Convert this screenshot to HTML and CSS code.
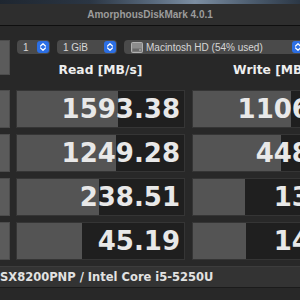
FILE: index.html
```html
<!DOCTYPE html>
<html lang="en">
<head>
    <meta charset="UTF-8">
    <meta name="viewport" content="width=device-width, initial-scale=1.0">
    <title>AmorphousDiskMark</title>
    <link rel="stylesheet" href="styles.css">
</head>
<body>
    <div class="wallpaper"></div>
    <header class="titlebar">AmorphousDiskMark 4.0.1</header>

    <main class="board">
        <div class="side-btn side-all"></div>

        <div class="toolbar">
            <div class="popup popup-count">
                <span class="popup-text">1</span>
                <span class="stepper">
                    <svg width="12" height="12" viewBox="0 0 12 12"><path d="M3.6 5 L6 2.7 L8.4 5 M3.6 7 L6 9.3 L8.4 7" fill="none" stroke="#fff" stroke-width="1.2" stroke-linecap="round" stroke-linejoin="round"/></svg>
                </span>
            </div>
            <div class="popup popup-size">
                <span class="popup-text">1 GiB</span>
                <span class="stepper">
                    <svg width="12" height="12" viewBox="0 0 12 12"><path d="M3.6 5 L6 2.7 L8.4 5 M3.6 7 L6 9.3 L8.4 7" fill="none" stroke="#fff" stroke-width="1.2" stroke-linecap="round" stroke-linejoin="round"/></svg>
                </span>
            </div>
            <div class="popup popup-disk">
                <svg class="disk-icon" width="12" height="11" viewBox="0 0 12 11">
                    <rect x="0.5" y="0.5" width="11" height="10" rx="1" fill="#8c8c8c" stroke="#b0b0b0"/>
                    <rect x="1.5" y="6.5" width="9" height="3" fill="#6a6a6a"/>
                    <circle cx="9" cy="8" r="0.8" fill="#cfcfcf"/>
                </svg>
                <span class="popup-text">Macintosh HD (54% used)</span>
                <span class="stepper">
                    <svg width="12" height="12" viewBox="0 0 12 12"><path d="M3.6 5 L6 2.7 L8.4 5 M3.6 7 L6 9.3 L8.4 7" fill="none" stroke="#fff" stroke-width="1.2" stroke-linecap="round" stroke-linejoin="round"/></svg>
                </span>
            </div>
        </div>

        <div class="col-head">Read [MB/s]</div>
        <div class="col-head">Write [MB/s]</div>

        <div class="side-btn"></div>
        <div class="cell" style="--p: 60.4%">1593.38</div>
        <div class="cell" style="--p: 58.6%">1106.42</div>

        <div class="side-btn"></div>
        <div class="cell" style="--p: 59.2%">1249.28</div>
        <div class="cell" style="--p: 52.7%">448.76</div>

        <div class="side-btn"></div>
        <div class="cell" style="--p: 49.1%">238.51</div>
        <div class="cell" style="--p: 31.4%">13.27</div>

        <div class="side-btn"></div>
        <div class="cell" style="--p: 39%">45.19</div>
        <div class="cell" style="--p: 32%">14.05</div>

        <footer class="footer">SX8200PNP / Intel Core i5-5250U</footer>
    </main>
</body>
</html>
```

FILE: styles.css
```css
html, body {
    margin: 0;
    padding: 0;
    overflow: hidden;
}

body {
    width: 300px;
    height: 300px;
    background-color: #282828;
    font-family: 'Liberation Sans', Arial, sans-serif;
}

.wallpaper {
    height: 4px;
    background: linear-gradient(to right, #1e2630 0%, #2b3644 30%, #56677a 50%, #7c8ea2 65%, #4a5a6c 85%, #2c3846 100%);
}

.titlebar {
    height: 21px;
    line-height: 21px;
    background-color: #2e2e2e;
    border-bottom: 1px solid #0f0f0f;
    color: #9c9c9c;
    font-size: 10px;
    font-weight: bold;
    text-align: center;
}

.board {
    display: grid;
    grid-template-columns: 16px 176px 169px;
    grid-template-rows: 14px 24px repeat(4, 38px) 22px;
    row-gap: 6px;
    padding-top: 14px;
    width: 361px;
}

.side-btn {
    width: 9px;
    background-color: #5b5b5b;
    border: 1px solid #4c4c4c;
    border-left: none;
}

.side-all {
    grid-row: 1 / 3;
    height: 33px;
    align-self: start;
}

.toolbar {
    grid-column: 2 / 4;
    display: flex;
    gap: 7px;
    padding-left: 1px;
}

.popup {
    display: flex;
    align-items: center;
    height: 14px;
    background-color: #4a4a4a;
    border-radius: 4px;
    padding: 0 1px 0 6px;
    box-sizing: border-box;
    color: #d6d6d6;
    font-size: 10px;
}

.popup-text {
    flex: 1;
}

.popup-count {
    width: 33px;
}

.popup-size {
    width: 60px;
}

.popup-disk {
    width: 181px;
    padding-left: 7px;
}

.disk-icon {
    margin-right: 3px;
}

.stepper {
    display: flex;
    width: 12px;
    height: 12px;
    background-color: #2c6fe4;
    border-radius: 3px;
}

.col-head {
    width: 169px;
    color: #eeeeee;
    font-family: 'DejaVu Sans', sans-serif;
    font-size: 12.3px;
    font-weight: bold;
    text-align: center;
    line-height: 20px;
}

.col-head:nth-of-type(1) {
    grid-column: 2;
}

.cell {
    width: 169px;
    box-sizing: border-box;
    border: 1px solid #353535;
    background: linear-gradient(to right, #545454 var(--p), #1f1f1f var(--p));
    color: #e8e8e8;
    font-family: 'DejaVu Sans', sans-serif;
    font-size: 26px;
    font-weight: bold;
    line-height: 36px;
    text-align: right;
    padding-right: 4px;
}

.footer {
    grid-column: 1 / -1;
    width: 300px;
    box-sizing: border-box;
    background-color: #333333;
    border-top: 1px solid #3c3c3c;
    border-bottom: 1px solid #1b1b1b;
    color: #e2e2e2;
    font-family: 'DejaVu Sans', sans-serif;
    font-size: 11.5px;
    font-weight: bold;
    line-height: 20px;
}
```
